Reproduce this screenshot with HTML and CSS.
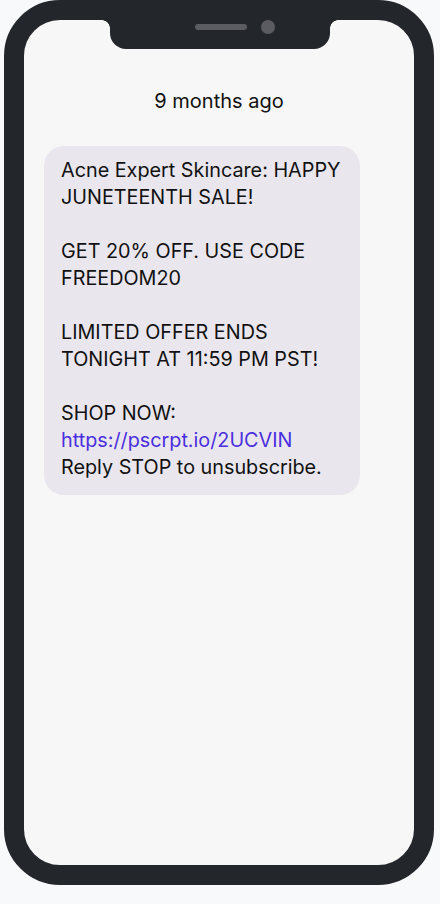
FILE: index.html
```html
<!DOCTYPE html>
<html lang="en">
<head>
    <meta charset="UTF-8">
    <meta name="viewport" content="width=device-width, initial-scale=1.0">
    <title>Message preview</title>
    <link rel="stylesheet" href="styles.css">
</head>
<body>

    <div class="phone">
        <div class="notch">
            <span class="speaker"></span>
            <span class="camera"></span>
        </div>

        <div class="screen">
            <p class="timestamp">9 months ago</p>

            <div class="bubble">
                <p>Acne Expert Skincare: HAPPY JUNETEENTH SALE!</p>
                <p>GET 20% OFF. USE CODE FREEDOM20</p>
                <p>LIMITED OFFER ENDS TONIGHT AT 11:59 PM PST!</p>
                <p>SHOP NOW:<br><a href="#">https://pscrpt.io/2UCVIN</a><br>Reply STOP to unsubscribe.</p>
            </div>
        </div>
    </div>

</body>
</html>
```

FILE: styles.css
```css
* {
    margin: 0;
    padding: 0;
    box-sizing: border-box;
    font-family: 'Inter', 'Liberation Sans', sans-serif;
}

body {
    background-color: #f8f9fb;
    width: 440px;
    height: 904px;
    padding: 0 6px 0 4px;
}

.phone {
    position: relative;
    width: 430px;
    height: 885px;
    border: 20px solid #23262b;
    border-radius: 56px;
    background-color: #f7f7f7;
}

.notch {
    position: absolute;
    top: -2px;
    left: 86px;
    width: 220px;
    height: 31px;
    background-color: #23262b;
    border-radius: 0 0 16px 16px;
    display: flex;
    justify-content: center;
    align-items: center;
    gap: 14px;
    padding-left: 30px;
    padding-bottom: 14px;
}

.notch::before,
.notch::after {
    content: '';
    position: absolute;
    top: 2px;
    width: 8px;
    height: 8px;
}

.notch::before {
    left: -8px;
    background: radial-gradient(circle at 0 100%, transparent 7.5px, #23262b 8px);
}

.notch::after {
    right: -8px;
    background: radial-gradient(circle at 100% 100%, transparent 7.5px, #23262b 8px);
}

.speaker {
    width: 52px;
    height: 6px;
    border-radius: 3px;
    background-color: #5b5c61;
}

.camera {
    width: 14px;
    height: 14px;
    border-radius: 50%;
    background-color: #5b5c61;
}

.screen {
    padding: 68px 20px 0 20px;
}

.timestamp {
    text-align: center;
    font-size: 20px;
    line-height: 27px;
    color: #111;
    margin-bottom: 31px;
}

.bubble {
    width: 316px;
    background-color: #e9e7ed;
    border-radius: 20px;
    padding: 11px 12px 14px 17px;
    font-size: 19.8px;
    line-height: 27px;
    color: #111;
}

.bubble p + p {
    margin-top: 27px;
}

.bubble a {
    color: #4a2ee0;
    text-decoration: none;
}
```
